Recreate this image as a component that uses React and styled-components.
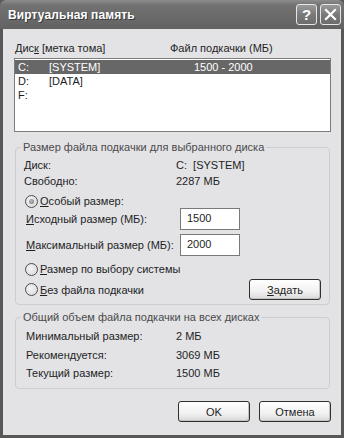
import React from "react";
import styled, { createGlobalStyle } from "styled-components";

const GlobalStyle = createGlobalStyle`
  html, body {
    margin: 0;
    padding: 0;
    background: #5a5a5a;
  }
`

const Window = styled.div`
  width: 344px;
  height: 438px;
  box-sizing: border-box;
  background: #575757;
  display: flex;
  flex-direction: column;
  padding: 0 3px 3px;
  font-family: "Liberation Sans", Arial, sans-serif;
  font-size: 11px;
  color: #1e1e1e;
  white-space: nowrap;
`

const TitleBar = styled.div`
  height: 29px;
  margin: 0 -3px;
  padding: 0 3px 0 8px;
  display: flex;
  align-items: center;
  background: linear-gradient(#8c8c8c 0%, #717171 18%, #6a6a6a 60%, #626262 100%);
  border-radius: 6px 6px 0 0;
`

const Title = styled.div`
  flex: 1;
  color: #fff;
  font-weight: bold;
  font-size: 12px;
  letter-spacing: 0.1px;
  text-shadow: 1px 1px 0 #3a3a3a;
  padding-top: 1px;
`

const TitleButton = styled.div`
  width: 19px;
  height: 19px;
  margin-left: 3px;
  border: 1px solid #e6e6e6;
  border-radius: 3px;
  background: linear-gradient(#9a9a9a, #7a7a7a 50%, #6c6c6c);
  display: flex;
  align-items: center;
  justify-content: center;
  color: #fff;
  font-weight: bold;
  font-size: 15px;
`

const Body = styled.div`
  flex: 1;
  background: #e3e3e6;
  padding: 12px 10px 0 11px;
  display: flex;
  flex-direction: column;
`

const ListHeader = styled.div`
  height: 14px;
  line-height: 14px;
  display: flex;
  padding-left: 1px;
`

const HeaderCell = styled.div`
  width: ${p => p.w || "auto"};
`

const ListBox = styled.div`
  margin-top: 3px;
  height: 71px;
  border: 1px solid #7c7c7c;
  background: #fff;
  padding: 1px 0 0;
`

const ListRow = styled.div`
  height: 14px;
  line-height: 14px;
  display: flex;
  padding-left: 3px;
  background: ${p => (p.selected ? "#676767" : "transparent")};
  color: ${p => (p.selected ? "#fff" : "#1e1e1e")};
`

const ListCell = styled.div`
  width: ${p => p.w || "auto"};
`

const GroupBox = styled.div`
  margin: ${p => p.top || 0}px 1px 0;
  border: 1px solid #cdcdd0;
  border-radius: 4px;
  padding: 0 8px ${p => p.bottom || 0}px 8px;
`

const Legend = styled.div`
  width: fit-content;
  margin: -8px 0 0 -3px;
  padding: 0 2px;
  line-height: 14px;
  background: #e3e3e6;
  color: #4a4a4a;
`

const InfoRow = styled.div`
  display: flex;
  height: 14px;
  line-height: 14px;
  margin-top: ${p => p.mt || 0}px;
  padding-left: ${p => p.pl || 0}px;
`

const InfoLabel = styled.div`
  width: ${p => p.w}px;
`

const RadioRow = styled.div`
  display: flex;
  align-items: center;
  height: ${p => p.h || 14}px;
  margin-top: ${p => p.mt || 0}px;
  padding-left: 1px;
`

const RadioCircle = styled.span`
  width: 11px;
  height: 11px;
  border-radius: 50%;
  border: 1px solid #4e4e4e;
  background: radial-gradient(circle at 40% 40%, #f4f4f4, #d6d6d6);
  display: flex;
  align-items: center;
  justify-content: center;
  margin-right: 2px;
  &::after {
    content: "";
    display: ${p => (p.checked ? "block" : "none")};
    width: 5px;
    height: 5px;
    border-radius: 50%;
    background: radial-gradient(circle at 40% 40%, #bdbdbd, #6e6e6e);
  }
`

const FieldRow = styled.div`
  display: flex;
  align-items: center;
  height: 22px;
  margin-top: ${p => p.mt || 0}px;
  padding-left: 2px;
`

const FieldLabel = styled.div`
  width: 154px;
`

const TextInput = styled.div`
  width: 52px;
  height: 20px;
  border: 1px solid #7a7a7a;
  background: #fff;
  line-height: 18px;
  padding-left: 6px;
`

const Spacer = styled.div`
  flex: 1;
`

const Button = styled.div`
  width: 70px;
  height: 19px;
  border: 1px solid #2f2f2f;
  border-radius: 3px;
  background: linear-gradient(#ffffff, #f1f1f1 60%, #d9d9d9);
  box-shadow: inset -1px -1px 0 #c4c4c4;
  display: flex;
  align-items: center;
  justify-content: center;
  margin-left: ${p => p.ml || 0}px;
`

const Footer = styled.div`
  display: flex;
  justify-content: flex-end;
  margin-top: 12px;
`

export default function App() {
  return (
    <>
      <GlobalStyle />
      <Window>
        <TitleBar>
          <Title>Виртуальная память</Title>
          <TitleButton>?</TitleButton>
          <TitleButton>
            <svg width="13" height="13" viewBox="0 0 13 13">
              <path d="M2 2 L11 11 M11 2 L2 11" stroke="#fff" strokeWidth="2.2" strokeLinecap="square" />
            </svg>
          </TitleButton>
        </TitleBar>
        <Body>
          <ListHeader>
            <HeaderCell w="155px">Дис<u>к</u> [метка тома]</HeaderCell>
            <HeaderCell>Файл подкачки (МБ)</HeaderCell>
          </ListHeader>
          <ListBox>
            <ListRow selected>
              <ListCell w="31px">C:</ListCell>
              <ListCell w="145px">[SYSTEM]</ListCell>
              <ListCell>1500 - 2000</ListCell>
            </ListRow>
            <ListRow>
              <ListCell w="31px">D:</ListCell>
              <ListCell>[DATA]</ListCell>
            </ListRow>
            <ListRow>
              <ListCell w="31px">F:</ListCell>
            </ListRow>
          </ListBox>

          <GroupBox top={15} bottom={4}>
            <Legend>Размер файла подкачки для выбранного диска</Legend>
            <InfoRow mt={4}>
              <InfoLabel w={152}>Диск:</InfoLabel>
              <div>C:&nbsp; [SYSTEM]</div>
            </InfoRow>
            <InfoRow mt={2}>
              <InfoLabel w={152}>Свободно:</InfoLabel>
              <div>2287 МБ</div>
            </InfoRow>
            <RadioRow mt={6}>
              <RadioCircle checked />
              <span><u>О</u>собый размер:</span>
            </RadioRow>
            <FieldRow>
              <FieldLabel><u>И</u>сходный размер (МБ):</FieldLabel>
              <TextInput>1500</TextInput>
            </FieldRow>
            <FieldRow mt={4}>
              <FieldLabel><u>М</u>аксимальный размер (МБ):</FieldLabel>
              <TextInput>2000</TextInput>
            </FieldRow>
            <RadioRow mt={6}>
              <RadioCircle />
              <span><u>Р</u>азмер по выбору системы</span>
            </RadioRow>
            <RadioRow mt={3} h={21}>
              <RadioCircle />
              <span><u>Б</u>ез файла подкачки</span>
              <Spacer />
              <Button><span><u>З</u>адать</span></Button>
            </RadioRow>
          </GroupBox>

          <GroupBox top={12} bottom={8}>
            <Legend>Общий объем файла подкачки на всех дисках</Legend>
            <InfoRow mt={5} pl={2}>
              <InfoLabel w={150}>Минимальный размер:</InfoLabel>
              <div>2 МБ</div>
            </InfoRow>
            <InfoRow mt={5} pl={2}>
              <InfoLabel w={150}>Рекомендуется:</InfoLabel>
              <div>3069 МБ</div>
            </InfoRow>
            <InfoRow mt={4} pl={2}>
              <InfoLabel w={150}>Текущий размер:</InfoLabel>
              <div>1500 МБ</div>
            </InfoRow>
          </GroupBox>

          <Footer>
            <Button>OK</Button>
            <Button ml={9}>Отмена</Button>
          </Footer>
        </Body>
      </Window>
    </>
  );
}
